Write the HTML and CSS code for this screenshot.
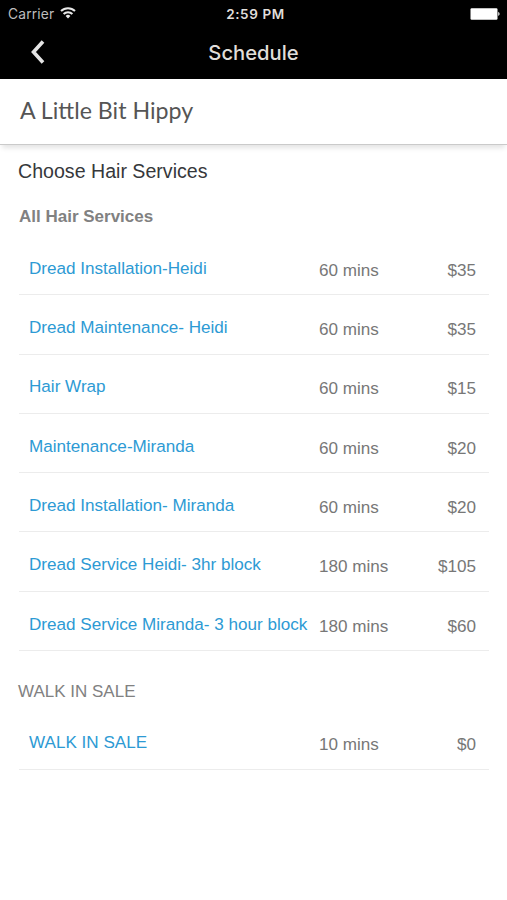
FILE: index.html
```html
<!DOCTYPE html>
<html lang="en">
<head>
<meta charset="utf-8">
<title>Schedule</title>
<link rel="stylesheet" href="styles.css">
</head>
<body>
<header class="top">
  <div class="status">
    <div class="carrier"><span>Carrier</span>
      <svg class="wifi" width="16" height="12" viewBox="0 0 16 12"><g fill="none" stroke="#e8e8e8" stroke-width="2"><path d="M1 4a10 10 0 0 1 14 0"/><path d="M3.6 7a6.2 6.2 0 0 1 8.8 0"/></g><path d="M5.6 9a3.4 3.4 0 0 1 4.8 0L8 11.5z" fill="#e8e8e8"/></svg>
    </div>
    <div class="clock">2:59 PM</div>
    <svg class="battery" width="31" height="12" viewBox="0 0 31 12"><rect x=".5" y=".2" width="27" height="11.5" rx="1.2" fill="#fff"/><path d="M28 3.8q3.6 2.1 0 4.2z" fill="#bbb"/></svg>
  </div>
  <nav class="nav">
    <svg class="back" width="16" height="26" viewBox="0 0 16 26"><path d="M14 1.5L4.5 12L14 22.5" fill="none" stroke="#e4e4e4" stroke-width="3.6"/></svg>
    <h1>Schedule</h1>
  </nav>
</header>
<div class="salon">A Little Bit Hippy</div>
<main>
  <h2>Choose Hair Services</h2>
  <h3>All Hair Services</h3>
  <ul>
    <li><a>Dread Installation-Heidi</a><span class="time">60 mins</span><span class="price">$35</span></li>
    <li><a>Dread Maintenance- Heidi</a><span class="time">60 mins</span><span class="price">$35</span></li>
    <li><a>Hair Wrap</a><span class="time">60 mins</span><span class="price">$15</span></li>
    <li><a>Maintenance-Miranda</a><span class="time">60 mins</span><span class="price">$20</span></li>
    <li><a>Dread Installation- Miranda</a><span class="time">60 mins</span><span class="price">$20</span></li>
    <li><a>Dread Service Heidi- 3hr block</a><span class="time">180 mins</span><span class="price">$105</span></li>
    <li><a>Dread Service Miranda- 3 hour block</a><span class="time">180 mins</span><span class="price">$60</span></li>
  </ul>
  <h3 class="walk">WALK IN SALE</h3>
  <ul>
    <li><a>WALK IN SALE</a><span class="time">10 mins</span><span class="price">$0</span></li>
  </ul>
</main>
</body>
</html>
```
FILE: styles.css
```css
* { box-sizing: border-box; }
body { margin: 0; background: #fff; font-family: "Liberation Sans", Arial, sans-serif; color: #777; }
.top { height: 79px; background: #000; color: #e0deda; }
.status { display: grid; grid-template-columns: 1fr auto 1fr; align-items: center; height: 27px; padding: 0 6px 0 8px; font-size: 13.8px; }
.carrier { display: flex; align-items: center; gap: 6px; color: #bdbdbd; font-family: Inter, sans-serif; letter-spacing: .15px; }
.wifi { margin-bottom: 2px; }
.clock { font: 600 13.5px/27px Inter, sans-serif; letter-spacing: .6px; padding: 1px 0 0 2px; }
.battery { justify-self: end; }
.nav { display: grid; grid-template-columns: 60px 1fr 60px; align-items: center; height: 50px; }
.back { margin-left: 29px; }
h1 { margin: 0; padding-top: 1px; text-align: center; font: 500 20.2px/50px Inter, sans-serif; }
.salon { height: 66px; padding-left: 20px; border-bottom: 1px solid #cacaca; box-shadow: 0 5px 5px -2px #e4e4e4; font: 23.2px/63px Lato, sans-serif; color: #555; }
main { padding: 14px 18px 0 19px; }
h2 { margin: 0 0 0 -1px; font-size: 19.6px; font-weight: 400; line-height: 24px; color: #36383b; }
h3 { margin: 24px 0 9px; font-size: 17px; line-height: 20px; color: #818181; }
ul { margin: 0; padding: 0; list-style: none; }
li { display: grid; grid-template-columns: 290px 1fr auto; height: 59.3px; padding: 20.8px 13px 0 10px; border-bottom: 1px solid #ececec; font-size: 17.1px; line-height: 24px; white-space: nowrap; }
li a { color: #2d9ad4; }
.time, .price { padding-top: 2px; }
.walk { margin: 31px 0 9px -1px; font-weight: 400; }
.walk + ul li { padding-top: 20px; }
```
